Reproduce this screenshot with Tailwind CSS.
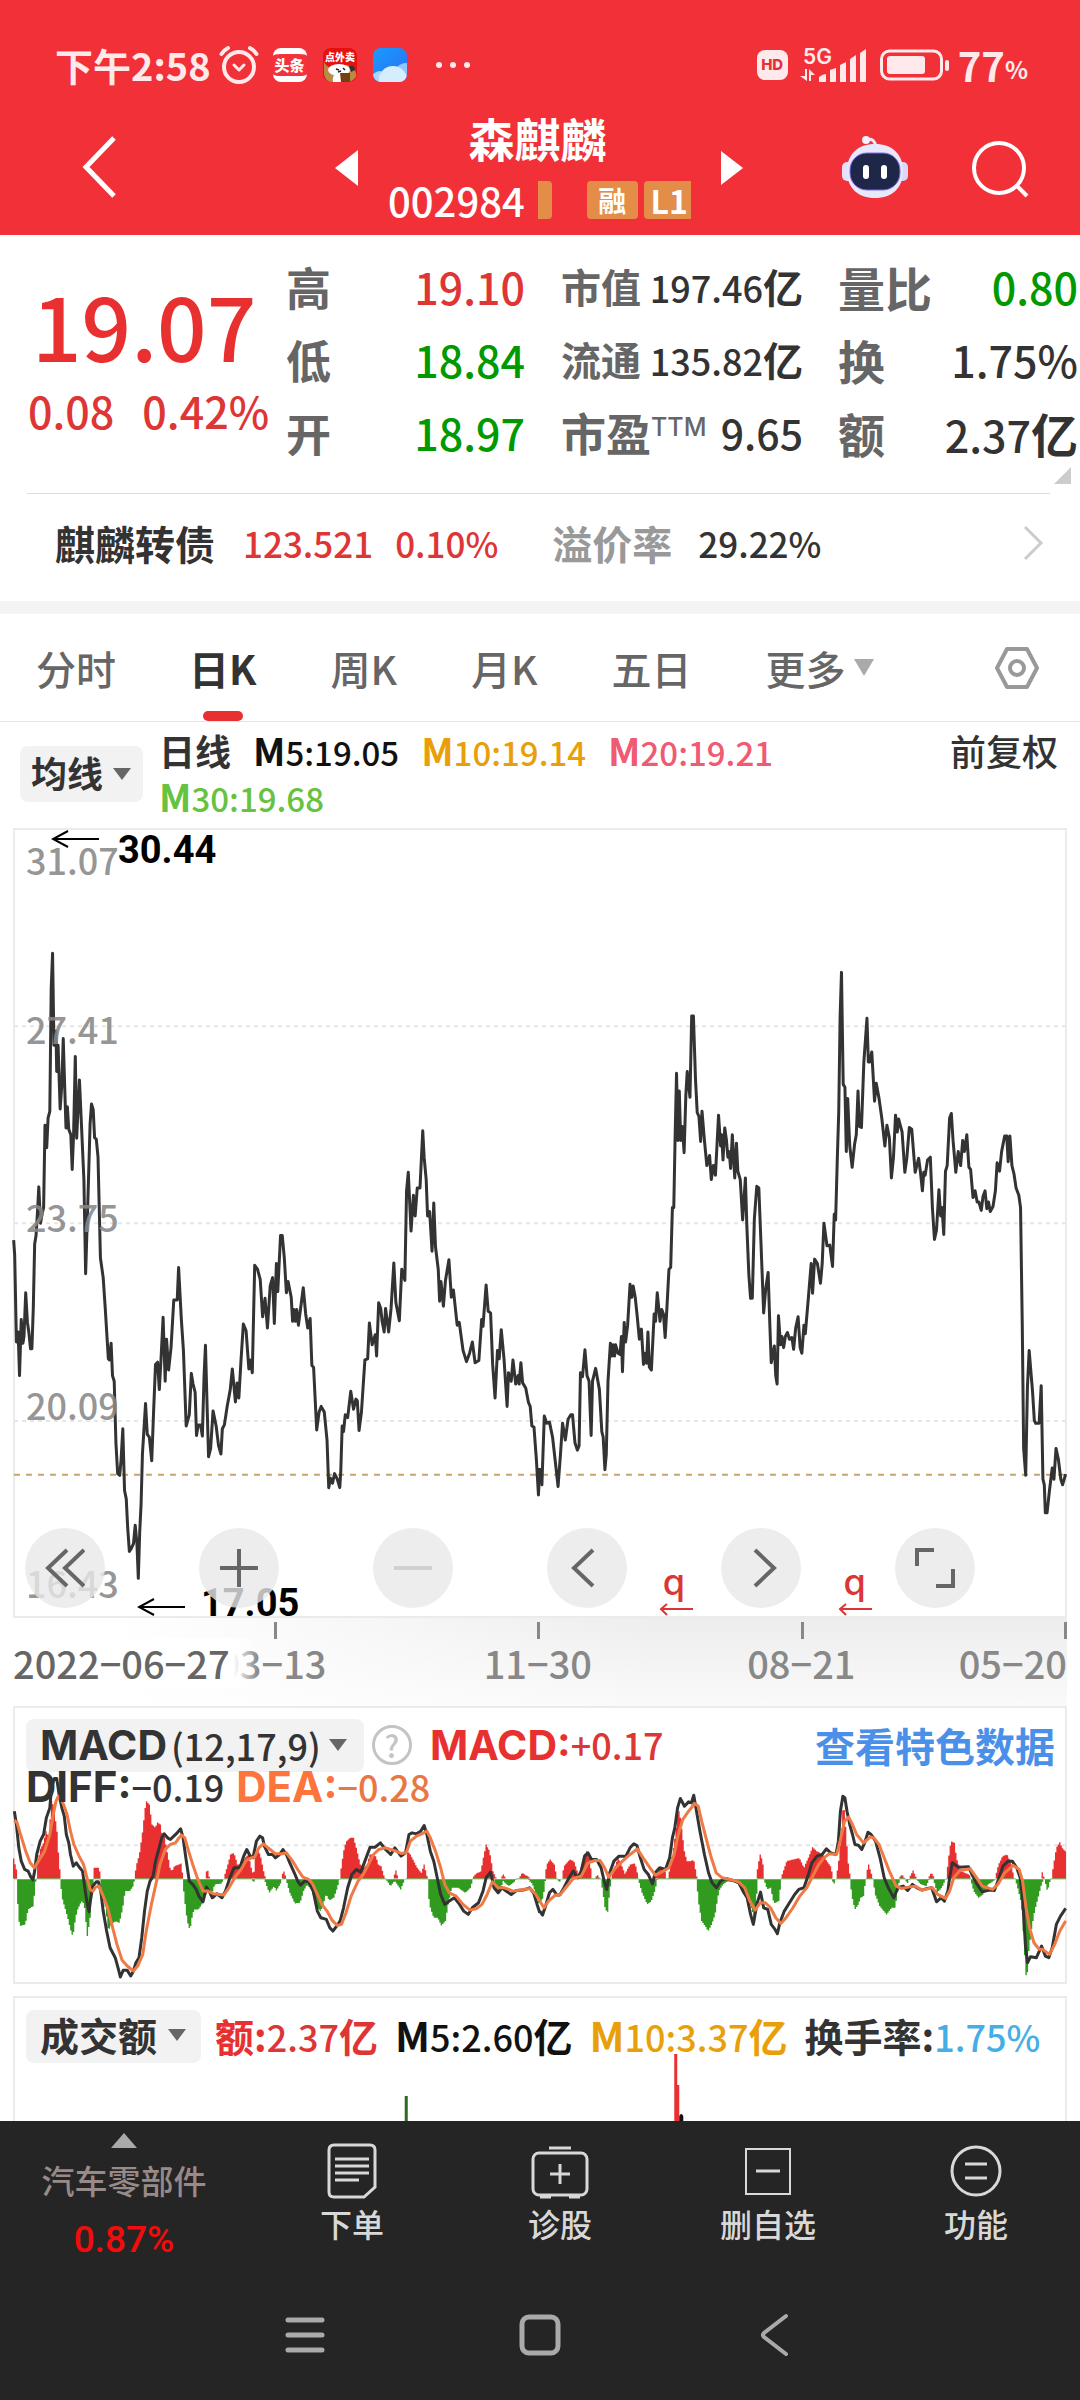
<!DOCTYPE html>
<html lang="zh-CN">
<head>
<meta charset="utf-8">
<meta name="viewport" content="width=device-width, initial-scale=1">
<title>森麒麟 002984</title>
<script src="https://cdn.jsdelivr.net/npm/@tailwindcss/browser@4"></script>
</head>
<body class="bg-white">
<div class="flex min-h-screen flex-col overflow-hidden bg-white font-['Noto_Sans_CJK_SC',sans-serif] font-medium text-[#333]">

  <header class="bg-[#f23038] text-white">
    <!-- status bar -->
    <div class="flex h-[100px] items-center pt-[30px] pr-[52px] pl-[55px] text-[#ffe9ea]">
      <span class="text-[38px] leading-[44px] font-bold">下午2:58</span>
      <svg class="ml-2 h-10 w-10" viewBox="0 0 40 40" fill="none" stroke="currentColor" stroke-width="4" stroke-linecap="round" stroke-linejoin="round"><circle cx="20" cy="22" r="15"/><path d="M2.500 9Q5 5 9 3M37.500 9Q35 5 31 3"/><path d="M15 20l5 5 5-5" stroke-width="3"/></svg>
      <span class="ml-[14px] flex h-[34px] w-[34px] items-center justify-center overflow-hidden rounded-lg border-y-[6px] border-white bg-[#f5323c] text-[15px] leading-5 font-black text-white">头条</span>
      <svg class="ml-4 h-[34px] w-[34px]" viewBox="0 0 34 34"><rect width="34" height="34" rx="8" fill="#e6100f"/><path d="M1 14q4 8 12 5 12-5 18 2 4 6 1 9-3 4-9 4H8q-6-1-7-8z" fill="#b98a45"/><ellipse cx="16" cy="22" rx="11" ry="6" fill="#fff"/><path d="M26 18q6-1 6 4l-4 2z" fill="#333"/><path d="M10 34q-1-8 4-8h6l4 8z" fill="#fff"/><path d="M17 25h10v9H18z" fill="#74400f"/><path d="M13 21l3 1M20 20l2 2M15 24l3-1" stroke="#222" stroke-width="1.500"/><text x="17" y="12.500" text-anchor="middle" font-size="10" font-weight="900" fill="#fff">点外卖</text></svg>
      <svg class="ml-4 h-[34px] w-[34px]" viewBox="0 0 34 34"><defs><clipPath id="wx"><rect width="34" height="34" rx="8"/></clipPath><linearGradient id="sky" x2="1" y2="1"><stop stop-color="#169bff"/><stop offset="1" stop-color="#2f6ff2"/></linearGradient></defs><g clip-path="url(#wx)"><rect width="34" height="34" fill="url(#sky)"/><circle cx="33" cy="27" r="12" fill="#8fc6ff"/><circle cx="7" cy="32" r="9" fill="#a9d6ff"/><circle cx="20" cy="32" r="14" fill="#d6edff"/></g></svg>
      <svg class="ml-[28px] h-2 w-[36px]" viewBox="0 0 36 8" fill="currentColor"><circle cx="4" cy="4" r="3"/><circle cx="18" cy="4" r="3"/><circle cx="32" cy="4" r="3"/></svg>
      <span class="ml-auto flex h-[30px] w-[31px] items-center justify-center rounded-lg bg-[#ffe9ea] font-[Inter,sans-serif] text-[15px] font-extrabold text-[#e5303a]">HD</span>
      <svg class="ml-3 h-[36px] w-[68px]" viewBox="0 0 68 36" fill="currentColor"><text x="3" y="17" font-family="Inter" font-size="21" font-weight="600">5G</text><path d="M5 22h2v12L0 29h5zM9 34V22l6 6h-4v6zM19 35v-5q4-3 7-3v8zM30 35V23l6-2v14zM40 35V18l6-3v20zM50 35V12l6-4v27zM60 35V6l6-4v33z"/></svg>
      <svg class="ml-3 h-8 w-[70px]" viewBox="0 0 70 32" fill="none" stroke="currentColor"><rect x="1.500" y="2" width="60" height="28" rx="8" stroke-width="3"/><rect x="7" y="7" width="38" height="18" rx="3" fill="currentColor" stroke="none"/><path d="M67 13v7" stroke-width="4" stroke-linecap="round"/></svg>
      <span class="ml-2 text-[40px] leading-[44px] font-bold">77</span><span class="pt-2 text-[24px] leading-7 font-bold">%</span>
    </div>

    <!-- title bar -->
    <div class="flex h-[135px] items-start">
      <button aria-label="返回" class="ml-[82px] pt-[35px]"><svg class="h-16 w-9" viewBox="0 0 36 64" fill="none" stroke="#fff" stroke-width="5"><path d="M32 3L4 32l28 29"/></svg></button>
      <button aria-label="上一只" class="ml-auto pt-[50px]"><svg class="h-9 w-[23px]" viewBox="0 0 23 36" fill="#fff"><path d="M23 0v36L0 18z"/></svg></button>
      <div class="mx-[30px] w-[303px] pt-[13px]">
        <h1 class="pr-1 text-center text-[46px] leading-[48px] font-bold">森麒麟</h1>
        <div class="flex items-center pt-4 whitespace-nowrap">
          <span class="text-[40px] leading-[46px]">002984</span>
          <span class="ml-[13px] h-[38px] w-[14px] rounded-r-sm bg-[#e38d48]"></span>
          <span class="ml-[35px] flex h-[38px] w-[51px] items-center justify-center rounded-sm bg-[#e38d48] text-[28px] font-bold">融</span>
          <span class="ml-[6px] flex h-[38px] w-[47px] items-center justify-center rounded-l-sm bg-[#e38d48] pl-1 text-[32px] font-bold">L1</span>
        </div>
      </div>
      <button aria-label="下一只" class="pt-[51px]"><svg class="h-[34px] w-[22px]" viewBox="0 0 22 34" fill="#fff"><path d="M0 0v34l22-17z"/></svg></button>
      <button aria-label="智能助手" class="ml-[98px] pt-[34px]"><svg class="h-[66px] w-[68px]" viewBox="0 0 68 66"><path d="M25 6q9-3 10 8" fill="none" stroke="#e9e6fb" stroke-width="3"/><circle cx="25" cy="6" r="4" fill="#f3f0ff"/><rect x="1" y="28" width="12" height="19" rx="5" fill="#e4e2fa"/><rect x="55" y="28" width="12" height="19" rx="5" fill="#dcd8f8"/><path d="M34 10c17 0 28 10 28 27S51 64 34 64 6 54 6 37s11-27 28-27z" fill="#e8e7fb"/><rect x="9" y="19" width="50" height="37" rx="17" fill="#1f2749" stroke="#7e6cf0" stroke-width="1"/><rect x="22" y="31" width="6" height="14" rx="3" fill="#fff"/><rect x="40" y="31" width="6" height="14" rx="3" fill="#fff"/></svg></button>
      <button aria-label="搜索" class="mr-[51px] ml-[62px] pt-[39px]"><svg class="h-[60px] w-[58px]" viewBox="0 0 58 60" fill="none" stroke="#fff" stroke-width="4"><circle cx="28" cy="29" r="25"/><path d="M45 46l11 11"/></svg></button>
    </div>
  </header>

  <main class="flex flex-1 flex-col">
    <!-- quote -->
    <section class="relative grid h-[258px] grid-cols-[286px_239px_241px_1fr] pt-[15px] text-[43px] leading-[73px]">
      <div class="pl-7 text-[#e93030]">
        <div class="pt-6 pl-1 text-[87px] leading-[100px]">19.07</div>
        <div class="flex gap-7 pt-[6px] text-[43px] leading-[60px] whitespace-nowrap text-[#de3535]"><span>0.08</span><span>0.42%</span></div>
      </div>
      <dl>
        <div class="flex justify-between"><dt class="text-[45px] font-bold text-[#666]">高</dt><dd class="text-[#de3535]">19.10</dd></div>
        <div class="flex justify-between"><dt class="text-[45px] font-bold text-[#666]">低</dt><dd class="text-[#090]">18.84</dd></div>
        <div class="flex justify-between"><dt class="text-[45px] font-bold text-[#666]">开</dt><dd class="text-[#090]">18.97</dd></div>
      </dl>
      <dl class="ml-9 w-[242px] whitespace-nowrap">
        <div class="flex h-[73px] justify-between text-[40px]"><dt class="font-bold text-[#666]">市值</dt><dd class="text-[36px]">197.46<span class="text-[40px] font-bold">亿</span></dd></div>
        <div class="flex h-[73px] justify-between text-[40px]"><dt class="font-bold text-[#666]">流通</dt><dd class="text-[36px]">135.82<span class="text-[40px] font-bold">亿</span></dd></div>
        <div class="flex h-[73px] justify-between"><dt class="flex text-[45px] font-bold text-[#666]">市盈<sup class="top-0 pt-[17px] font-[Inter,sans-serif] text-[25px] leading-7 font-medium">TTM</sup></dt><dd class="text-[41px]">9.65</dd></div>
      </dl>
      <dl class="ml-[72px] pr-0.5">
        <div class="flex h-[73px] justify-between"><dt class="text-[47px] font-bold text-[#666]">量比</dt><dd class="text-[#090]">0.80</dd></div>
        <div class="flex h-[73px] justify-between"><dt class="text-[47px] font-bold text-[#666]">换</dt><dd>1.75%</dd></div>
        <div class="flex h-[73px] justify-between"><dt class="text-[47px] font-bold text-[#666]">额</dt><dd>2.37<span class="text-[47px] font-bold">亿</span></dd></div>
      </dl>
      <svg class="absolute right-[9px] bottom-[9px] h-[17px] w-[17px]" viewBox="0 0 17 17" fill="#ccc"><path d="M17 0v17H0z"/></svg>
    </section>

    <a href="#bond" class="mr-[30px] ml-[27px] flex h-[108px] items-center border-t border-[#ddd] pr-[6px] pb-[10px] pl-7 text-[35px] leading-[50px]">
      <span class="text-[40px] font-bold">麒麟转债</span>
      <span class="ml-7 text-[#de3535]">123.521</span>
      <span class="ml-[22px] text-[#de3535]">0.10%</span>
      <span class="ml-[54px] text-[40px] font-bold text-[#999]">溢价率</span>
      <span class="ml-[26px]">29.22%</span>
      <svg class="ml-auto h-9 w-[22px]" viewBox="0 0 22 36" fill="none" stroke="#ccc" stroke-width="3"><path d="M3 2l16 16L3 34"/></svg>
    </a>
    <div class="h-[13px] bg-[#f4f4f4]"></div>

    <!-- period tabs -->
    <nav class="flex h-[108px] items-center border-b border-[#e4e4e4] pr-10 pl-9 text-[40px] leading-[50px] text-[#666]">
      <a href="#time">分时</a>
      <a href="#day" class="relative ml-[73px] flex h-full items-center font-bold text-[#333]">日K<span class="absolute bottom-0 left-1/2 h-[10px] w-10 -translate-x-1/2 rounded-full bg-[#e93030]"></span></a>
      <a href="#week" class="ml-[74px]">周K</a>
      <a href="#month" class="ml-[74px]">月K</a>
      <a href="#five" class="ml-[74px]">五日</a>
      <button class="ml-[74px] flex items-center gap-2">更多<svg class="h-[17px] w-[20px]" viewBox="0 0 20 17" fill="#aaa"><path d="M0 0h20L10 17z"/></svg></button>
      <button aria-label="设置" class="ml-auto"><svg class="h-11 w-[46px]" viewBox="0 0 46 44" fill="none" stroke="#999" stroke-width="4" stroke-linejoin="round"><path d="M13 3h20l10 19-10 19H13L3 22z"/><circle cx="23" cy="22" r="7"/></svg></button>
    </nav>

    <!-- moving averages -->
    <section class="flex h-[106px] pr-[22px] pl-5 text-[33px] leading-[46px]">
      <div class="relative mt-6 h-14">
        <select aria-label="主图指标" class="h-14 w-[123px] appearance-none rounded-lg bg-[#f2f2f2] pb-1 pl-[11px] text-[36px] leading-[52px] font-bold"><option>均线</option></select>
        <svg class="pointer-events-none absolute top-[22px] right-3 h-3 w-[18px]" viewBox="0 0 18 12" fill="#666"><path d="M0 0h18L9 12z"/></svg>
      </div>
      <div class="ml-4 flex flex-1 flex-wrap content-start gap-x-[22px] pt-[5px] whitespace-nowrap">
        <b class="h-[46px] text-[36px]">日线</b>
        <span class="h-[46px] text-[#111]"><b class="text-[38px]">M</b>5:19.05</span>
        <span class="h-[46px] text-[#e99f0a]"><b class="text-[38px]">M</b>10:19.14</span>
        <span class="h-[46px] text-[#f05a72]"><b class="text-[38px]">M</b>20:19.21</span>
        <span class="h-[46px] basis-full text-[#66c23f]"><b class="text-[38px]">M</b>30:19.68</span>
      </div>
      <button class="self-start pt-[5px] text-[36px]">前复权</button>
    </section>

    <!-- price chart -->
    <section class="relative mx-[13px] h-[790px] border-2 border-[#ebebeb]">
      <svg class="absolute -inset-[1px] h-[788px] w-[calc(100%+2px)] overflow-visible" viewBox="41 14 3055 1407" preserveAspectRatio="none" fill="none">
        <g stroke="#e6e6e6" stroke-width="2" stroke-dasharray="4 4"><path vector-effect="non-scaling-stroke" d="M41 366H3096"/><path vector-effect="non-scaling-stroke" d="M41 718H3096"/><path vector-effect="non-scaling-stroke" d="M41 1071H3096"/></g>
        <path vector-effect="non-scaling-stroke" d="M41 1167H3096" stroke="#c4a56f" stroke-width="2" stroke-dasharray="6 6"/>
        <g stroke="#333" stroke-width="3" stroke-linejoin="round">
          <polyline vector-effect="non-scaling-stroke" points="40,748 43,775 48,930 53,912 57,990 62,890 67,932 70,920 75,842 80,895 84,912 89,942 93,942 97,870 101,755 105,740 109,700 113,653 118,718 123,700 127,690 131,543 136,583 140,530 145,518 149,300 153,236 157,400 163,375 165,447 169,400 175,514 180,470 184,388 188,470 192,548 196,510 200,550 206,560 210,622 214,560 219,420 223,566 231,462 236,530 244,640 249,808 255,690 262,540 266,505 271,515 275,565 280,568 285,600 292,780 300,815 306,870 315,960 318,962 323,932 327,990 332,1000 337,1110 342,1165 348,1168 352,1140 357,1085 362,1195 367,1210 371,1260 376,1304 382,1298 388,1290 393,1257 398,1290 402,1352 406,1270 410,1220 414,1130 423,1040 428,1095 434,1100 441,1142 446,1060 452,970 458,966 463,1015 468,960 474,886 480,1000 484,925 490,980 497,940 505,855 515,855 519,797 527,890 533,945 541,1080 550,1060 556,986 561,1005 567,1020 571,1097 576,1078 583,1078 588,1098 593,990 597,936 602,1050 606,1135 612,1120 619,1053 628,1080 635,1115 642,1130 646,1085 652,1078 660,1045 669,1015 675,978 684,1037 689,1003 694,1030 700,965 707,898 715,910 723,978 727,962 733,985 740,793 748,800 756,818 763,885 770,852 777,905 785,830 792,815 797,897 803,790 807,840 815,740 820,740 826,780 832,842 837,822 846,850 850,893 854,872 858,893 862,872 867,900 881,833 888,880 894,905 901,888 906,972 911,975 920,1087 927,1055 933,1045 942,1055 950,1105 955,1190 960,1173 966,1182 972,1165 980,1175 987,1190 990,1160 994,1080 998,1090 1003,1060 1010,1065 1019,1018 1027,1050 1034,1032 1038,1035 1043,1088 1050,1055 1060,962 1068,960 1073,896 1081,935 1090,917 1094,955 1100,860 1106,870 1110,893 1116,912 1120,870 1129,912 1136,870 1144,789 1150,860 1160,892 1167,800 1176,820 1181,660 1186,627 1194,732 1201,668 1206,705 1212,655 1220,655 1228,553 1232,600 1238,640 1242,705 1248,697 1255,768 1260,682 1265,760 1273,800 1277,857 1281,822 1288,866 1294,820 1304,783 1311,850 1317,837 1328,900 1334,895 1345,945 1355,965 1364,950 1372,930 1380,967 1391,963 1399,890 1403,902 1412,828 1418,875 1425,878 1431,970 1438,1030 1445,945 1450,960 1456,908 1464,960 1473,1045 1477,985 1485,1000 1490,962 1498,1005 1505,990 1508,1005 1513,967 1518,1003 1527,1012 1535,1038 1540,1045 1545,1080 1551,1082 1558,1140 1564,1203 1568,1155"/>
          <polyline transform="translate(1568 0)" vector-effect="non-scaling-stroke" points="0,1155 6,1185 13,1062 20,1075 28,1073 37,1100 47,1155 53,1188 60,1130 66,1075 74,1105 82,1068 90,1060 95,1060 102,1110 109,1123 114,1115 118,985 124,992 131,944 137,990 143,1000 149,1097 153,1000 162,977 173,1015 180,1090 184,1100 189,1158 193,1130 198,1000 205,932 209,955 213,935 217,955 220,935 227,950 233,952 237,920 240,983 245,895 249,930 255,900 262,827 267,850 271,830 277,850 283,885 289,925 295,907 301,970 305,950 310,968 314,912 318,975 324,980 332,880 336,893 341,842 349,893 354,872 359,880 364,922 369,870 375,800 380,797 385,690 389,690 393,560 397,450 401,570 405,482 409,570 414,545 419,592 424,490 428,447 436,493 441,348 446,348 452,460 457,520 462,527 467,572 471,518 478,570 485,615 493,597 498,640 504,615 510,632 519,525 525,580 528,560 532,605 537,548 542,570 546,600 550,590 554,620 559,560 566,637 571,575 575,625 582,640 589,712 597,637 601,720 607,810 612,852 617,852 623,710 630,652 636,655 642,750 650,878 656,835 663,806 668,900 672,967 681,937 685,990 689,1005 693,883 699,935 703,920 708,940 713,920 719,913 725,925 732,922 737,943 743,905 750,885 756,940 761,950 767,900 771,915 780,850 788,790 792,843 798,782 806,790 815,825 820,790 825,718 834,758 842,757 850,795 855,702 859,712 864,600 868,520 872,350 876,270 881,470 886,475 890,590 894,495 900,580 907,618 914,577 919,560 924,482 928,545 934,547 941,430 950,352 954,430 958,430 964,412 972,500 977,468 985,495 993,530 1002,580 1008,543 1015,565 1021,637 1027,600 1033,525 1038,555 1042,532 1052,555 1060,627 1066,600 1073,547 1080,550 1090,627 1100,602 1105,625 1111,660 1115,627 1119,632 1126,605 1134,600 1140,690 1146,747 1152,730 1159,658 1164,705 1168,690 1173,738 1178,625 1183,615 1190,530 1195,522 1200,570 1208,627 1215,590 1222,615 1228,570 1233,590 1240,560 1246,618 1251,622 1258,672 1264,660 1270,680 1275,680 1282,695 1287,670 1293,660 1298,692 1303,680 1308,697 1316,688 1323,660 1328,610 1335,625 1341,590 1350,562 1356,562 1360,608 1365,562 1371,615 1377,630 1383,655 1391,668 1396,690 1401,900 1405,1120 1411,1168 1416,1010 1421,945 1427,990 1431,1020 1436,1070 1440,1075 1450,1075 1456,1008 1461,1175 1465,1185 1468,1235 1473,1235 1480,1195 1488,1155 1493,1175 1499,1120 1506,1140 1513,1175 1518,1185 1527,1166"/>
        </g>
      </svg>
      <!-- axis values and extremes -->
      <div class="absolute inset-0 text-[36px] leading-10 text-[#888]/90">
        <span class="absolute top-[9px] left-[11px]">31.07</span>
        <span class="absolute top-[178px] left-[11px]">27.41</span>
        <span class="absolute top-[366px] left-[11px]">23.75</span>
        <span class="absolute top-[554px] left-[11px]">20.09</span>
        <span class="absolute top-[732px] left-[11px]">16.43</span>
      </div>
      <div class="absolute inset-0 font-[Roboto,sans-serif] text-[38px] leading-10 font-bold text-black">
        <svg class="absolute top-0 left-9 h-[18px] w-12" viewBox="0 0 48 18" fill="none" stroke="#000" stroke-width="2"><path d="M48 9H2M17 1L2 9l15 8"/></svg>
        <span class="absolute top-0 left-[103px]">30.44</span>
        <svg class="absolute bottom-0 left-[122px] h-[18px] w-12" viewBox="0 0 48 18" fill="none" stroke="#000" stroke-width="2"><path d="M48 9H2M17 1L2 9l15 8"/></svg>
        <span class="absolute -bottom-[7px] left-[186px]">17.05</span>
      </div>
      <div class="absolute inset-0 font-[Inter,sans-serif] text-[36px] leading-8 font-medium text-[#dc3535]">
        <span class="absolute bottom-[18px] left-[61.700%]">q</span>
        <svg class="absolute bottom-0 left-[61.300%] h-[13px] w-[34px]" viewBox="0 0 34 13" fill="none" stroke="#dc3535" stroke-width="2"><path d="M34 6H2M8 1L2 6l6 6"/></svg>
        <span class="absolute bottom-[18px] left-[78.900%]">q</span>
        <svg class="absolute bottom-0 left-[78.400%] h-[13px] w-[34px]" viewBox="0 0 34 13" fill="none" stroke="#dc3535" stroke-width="2"><path d="M34 6H2M8 1L2 6l6 6"/></svg>
      </div>
      <div class="absolute bottom-[8px] left-[10px] flex gap-[94px]">
        <button aria-label="最早" class="flex h-20 w-20 items-center justify-center rounded-full bg-[#e9e9e9]/80"><svg class="h-10 w-10" viewBox="0 0 40 40" fill="none" stroke="#666" stroke-width="4"><path d="M22 2L3 20l19 18M39 2L20 20l19 18"/></svg></button>
        <button aria-label="放大" class="flex h-20 w-20 items-center justify-center rounded-full bg-[#e9e9e9]/80"><svg class="h-10 w-10" viewBox="0 0 40 40" fill="none" stroke="#666" stroke-width="4"><path d="M1 20h38M20 1v38"/></svg></button>
        <button aria-label="缩小" class="flex h-20 w-20 items-center justify-center rounded-full bg-[#e9e9e9]/80"><svg class="h-10 w-10" viewBox="0 0 40 40" fill="none" stroke="#d0d0d0" stroke-width="4"><path d="M1 20h38"/></svg></button>
        <button aria-label="左移" class="flex h-20 w-20 items-center justify-center rounded-full bg-[#e9e9e9]/80"><svg class="h-10 w-10" viewBox="0 0 40 40" fill="none" stroke="#666" stroke-width="4"><path d="M26 2L7 20l19 18"/></svg></button>
        <button aria-label="右移" class="flex h-20 w-20 items-center justify-center rounded-full bg-[#e9e9e9]/80"><svg class="h-10 w-10" viewBox="0 0 40 40" fill="none" stroke="#666" stroke-width="4"><path d="M14 2l19 18-19 18"/></svg></button>
        <button aria-label="全屏" class="flex h-20 w-20 items-center justify-center rounded-full bg-[#e9e9e9]/80"><svg class="h-[42px] w-[42px]" viewBox="0 0 42 42" fill="none" stroke="#666" stroke-width="4"><path d="M3 19V3h17M39 22v17H22"/></svg></button>
      </div>
    </section>

    <!-- dates -->
    <div class="relative mx-[13px] h-[88px] bg-linear-to-b from-[#ededed] to-[#fafafa] text-[38px] leading-[50px] text-[#888]">
      <div class="absolute inset-y-0 left-0 w-[62%] bg-linear-to-r from-white from-15% to-transparent"></div>
      <div class="relative grid grid-cols-4 pt-5 text-right">
        <span class="translate-x-[50px]">03−13</span>
        <span class="translate-x-[52px]">11−30</span>
        <span class="translate-x-[52px]">08−21</span>
        <span>05−20</span>
      </div>
      <div class="absolute inset-x-0 top-1 grid h-[17px] grid-cols-4"><i class="border-r-[3px] border-[#888]"></i><i class="border-r-[3px] border-[#888]"></i><i class="border-r-[3px] border-[#888]"></i><i class="border-r-[3px] border-[#888]"></i></div>
      <span class="absolute top-5 left-0 bg-linear-to-r from-white from-90% to-white/0 pr-7 text-[#666]">2022−06−27</span>
    </div>

    <!-- MACD -->
    <section class="relative mx-[13px] h-[278px] border-2 border-[#ebebeb] bg-white">
      <svg class="absolute -inset-[1px] h-[276px] w-[calc(100%+2px)] overflow-visible" viewBox="41 47 3055 829" preserveAspectRatio="none" fill="none">
        <path vector-effect="non-scaling-stroke" d="M41 462H3096" stroke="#e6e6e6" stroke-width="2" stroke-dasharray="4 4"/>
        <path id="up" fill="#e83030"/>
        <path id="down" fill="#309b1e"/>
        <g stroke-width="3" stroke-linejoin="round">
          <polyline stroke="#333" vector-effect="non-scaling-stroke" points="42,360 48,400 55,470 62,510 72,535 82,540 90,558 96,566 101,540 107,490 117,450 127,430 135,380 145,350 150,290 158,262 165,262 172,310 180,350 187,375 193,430 200,455 205,490 213,525 222,515 232,530 240,540 248,600 254,640 259,662 264,620 270,585 280,572 286,572 293,600 300,660 310,720 320,770 335,800 343,830 350,858 358,838 370,838 380,855 388,840 395,815 404,800 412,740 420,660 428,600 436,570 445,555 452,510 460,480 470,440 477,428 487,440 495,445 505,435 515,425 525,413 532,440 540,500 550,570 560,580 570,595 578,615 590,632 600,588 610,605 617,620 630,608 645,620 655,600 668,560 680,530 697,530 708,495 717,475 727,495 735,500 745,450 755,435 763,440 768,465 780,490 792,490 800,500 812,490 822,475 832,490 842,515 855,545 865,570 873,582 885,570 897,572 910,600 922,660 932,680 948,685 958,710 967,720 978,705 988,690 998,650 1010,590 1022,550 1035,535 1048,543 1060,510 1075,468 1090,468 1105,455 1120,475 1135,490 1147,470 1165,495 1178,485 1188,430 1197,425 1210,428 1222,420 1232,403 1240,430 1250,480 1260,510 1270,560 1280,610 1292,640 1305,630 1320,620 1335,640 1347,660 1360,670 1372,650 1390,635 1403,600 1412,560 1425,543 1435,590 1447,605 1458,590 1470,600 1485,610 1500,598 1520,597 1538,590 1550,605 1560,640 1568,665"/>
          <polyline transform="translate(1568 0)" stroke="#333" vector-effect="non-scaling-stroke" points="0,660 8,672 18,640 28,605 38,595 50,612 58,612 70,590 85,560 97,540 110,560 120,540 130,495 140,485 150,505 165,505 178,530 187,570 194,595 203,545 215,510 230,495 250,495 262,470 273,458 282,463 292,500 303,535 315,550 327,578 335,545 348,530 365,535 377,500 385,440 392,410 400,350 408,322 420,345 432,332 440,335 447,312 455,360 465,420 478,490 490,545 500,575 513,590 525,570 540,562 560,568 578,575 590,600 602,620 612,670 620,700 630,640 641,603 650,650 662,655 672,700 683,715 690,728 697,695 710,660 725,635 740,610 752,595 767,590 780,550 790,515 805,495 820,490 832,473 845,485 860,490 867,450 873,360 880,315 886,320 892,360 900,400 908,430 915,460 925,462 935,475 945,450 953,423 962,430 975,450 988,500 1000,560 1012,590 1028,620 1040,590 1055,585 1068,598 1082,580 1095,590 1110,597 1125,592 1138,590 1152,632 1165,620 1175,630 1185,600 1190,560 1198,515 1215,528 1245,527 1255,550 1270,580 1285,602 1305,597 1320,598 1332,565 1345,525 1360,510 1372,510 1385,530 1395,560 1402,620 1410,760 1416,815 1425,797 1442,800 1457,765 1468,795 1478,800 1488,770 1500,700 1512,675 1527,652"/>
          <polyline stroke="#f07a45" vector-effect="non-scaling-stroke" points="42,387 50,395 60,430 75,480 88,515 100,530 112,510 130,480 145,430 155,370 163,330 170,315 178,325 185,340 195,370 205,420 215,460 230,495 243,520 253,560 262,595 270,600 278,588 288,585 300,615 313,650 325,700 340,760 355,808 370,825 388,840 400,825 415,790 425,720 440,640 455,570 465,520 480,475 495,460 510,455 520,440 528,432 537,440 548,480 560,520 575,565 590,600 605,600 620,608 650,612 665,590 685,555 700,535 715,508 730,500 740,497 752,470 765,458 785,475 800,488 820,488 832,485 850,510 865,535 880,558 897,565 908,578 920,605 935,640 950,660 965,688 980,703 992,700 1005,665 1020,615 1040,570 1055,550 1070,520 1085,490 1100,475 1120,470 1145,478 1165,487 1180,485 1192,450 1210,435 1225,428 1240,420 1250,440 1265,480 1280,530 1292,580 1305,605 1325,615 1345,640 1365,657 1385,652 1400,640 1415,610 1430,572 1447,590 1465,590 1490,600 1520,595 1540,592 1555,608 1568,630"/>
          <polyline transform="translate(1568 0)" stroke="#f07a45" vector-effect="non-scaling-stroke" points="0,630 12,650 25,630 45,612 60,610 75,590 97,562 120,555 140,515 160,508 175,508 188,530 200,558 220,530 240,510 262,490 283,473 300,500 320,530 335,552 350,545 375,530 390,490 402,430 415,385 432,360 450,337 460,345 470,390 485,450 498,500 512,545 530,560 560,567 578,573 595,590 610,630 625,657 640,635 655,635 670,650 685,680 700,697 715,680 735,650 755,615 775,590 790,560 810,520 825,500 840,488 862,490 872,450 885,390 897,378 908,400 920,430 940,455 960,437 970,440 985,460 1000,500 1015,540 1035,585 1050,592 1070,588 1090,585 1110,597 1140,590 1155,610 1178,622 1190,600 1202,560 1220,538 1250,533 1265,555 1285,585 1315,595 1330,580 1350,545 1375,523 1392,535 1402,570 1412,650 1422,710 1435,755 1450,775 1460,775 1480,790 1495,760 1510,720 1527,690"/>
        </g>
      </svg>
      <div class="relative pt-[10px] pr-[10px] pl-[11px] text-[36px] leading-[53px] whitespace-nowrap">
        <div class="flex items-center">
          <button aria-haspopup="listbox" class="flex h-[53px] w-[338px] items-center rounded-lg bg-[#f2f2f2] pl-[14px]"><b class="font-[Inter,sans-serif] text-[41px]">MACD</b><span class="ml-1">(12,17,9)</span><svg class="ml-2 h-3 w-[18px]" viewBox="0 0 18 12" fill="#666"><path d="M0 0h18L9 12z"/></svg></button>
          <button aria-label="说明" class="ml-2 flex h-10 w-10 items-center justify-center rounded-full border-3 border-[#c4c4c4] text-[30px] leading-8 text-[#c4c4c4]">?</button>
          <span class="ml-[18px] text-[#de3535]"><b class="font-[Inter,sans-serif] text-[41px] text-[#e93030]">MACD:</b>+0.17</span>
          <a href="#data" class="ml-auto text-[40px] font-bold text-[#4a90e8]">查看特色数据</a>
        </div>
        <div class="-mt-3 flex gap-3 text-[36px] leading-[53px]"><span><b class="font-[Inter,sans-serif] text-[42px]">DIFF:</b>−0.19</span><span class="text-[#e87744]"><b class="font-[Inter,sans-serif] text-[42px] text-[#fd743c]">DEA:</b>−0.28</span></div>
      </div>
    </section>

    <!-- turnover -->
    <section class="relative mx-[13px] mt-3 h-[124px] flex-1 border-2 border-b-0 border-[#ebebeb]">
      <div class="flex h-[65px] items-center pt-[10px] pl-[11px] text-[36px] leading-[53px] whitespace-nowrap">
        <div class="relative h-[53px]">
          <select aria-label="副图指标" class="h-[53px] w-[175px] appearance-none rounded-lg bg-[#f2f2f2] pb-1 pl-[14px] text-[39px] leading-[49px] font-bold"><option>成交额</option></select>
          <svg class="pointer-events-none absolute top-5 right-[15px] h-3 w-[18px]" viewBox="0 0 18 12" fill="#666"><path d="M0 0h18L9 12z"/></svg>
        </div>
        <span class="ml-[14px] text-[#de3535]"><b class="text-[39px] text-[#e93030]">额:</b>2.37<b class="text-[39px]">亿</b></span>
        <span class="ml-[17px] text-[#111]"><b class="text-[41px]">M</b>5:2.60<b class="text-[39px]">亿</b></span>
        <span class="ml-[17px] text-[#e99f0a]"><b class="text-[41px]">M</b>10:3.37<b class="text-[39px]">亿</b></span>
        <span class="ml-[17px]"><b class="text-[39px]">换手率:</b><span class="text-[#45aee6]">1.75%</span></span>
      </div>
      <svg class="absolute inset-x-0 bottom-0 h-[67px] w-full" viewBox="0 0 1048 67" preserveAspectRatio="none"><path d="M389 42h3v25h-3z" fill="#2f6b1c"/><path d="M658 0h3v31h2v36h-5z" fill="#e83030"/><path d="M663 67v-5q2-4 4 0v5z" fill="#111"/></svg>
    </section>
  </main>

  <footer class="bg-[#252525] text-[#d8d8d8]">
    <div class="grid h-[154px] grid-cols-[248px_1fr_1fr_1fr_1fr] text-[32px] leading-10">
      <a href="#sector" class="flex flex-col items-center pt-3">
        <svg class="h-[15px] w-[26px]" viewBox="0 0 26 15" fill="#aaa"><path d="M13 0l13 15H0z"/></svg>
        <span class="mt-3 text-[33px] text-[#988a88]">汽车零部件</span>
        <span class="mt-[20px] font-[Roboto,sans-serif] text-[37px] text-[#f20c0c]">0.87%</span>
      </a>
      <button class="flex flex-col items-center pt-[22px]"><svg class="h-14 w-14" viewBox="0 0 56 56" fill="none" stroke="#d8d8d8" stroke-width="3"><path d="M10 2h36q5 0 5 5v37L40 54H10q-5 0-5-5V7q0-5 5-5zM11 16h34M11 23h34M11 30h34M11 37h24"/></svg><span class="mt-1">下单</span></button>
      <button class="flex flex-col items-center pt-[22px]"><svg class="h-14 w-[60px]" viewBox="0 0 60 56" fill="none" stroke="#d8d8d8" stroke-width="3"><rect x="3" y="10" width="54" height="42" rx="6"/><path d="M19 5h22M30 21v20M20 31h20M10 54h11M39 54h11"/></svg><span class="mt-1">诊股</span></button>
      <button class="flex flex-col items-center pt-[22px]"><svg class="h-14 w-14" viewBox="0 0 56 56" fill="none" stroke="#d8d8d8" stroke-width="2"><rect x="6" y="6" width="44" height="45"/><path d="M16 28h24" stroke-width="3"/></svg><span class="mt-1">删自选</span></button>
      <button class="flex flex-col items-center pt-[22px]"><svg class="h-14 w-14" viewBox="0 0 56 56" fill="none" stroke="#d8d8d8" stroke-width="3"><circle cx="28" cy="28" r="24"/><path d="M17 21h22M17 35h22"/></svg><span class="mt-1">功能</span></button>
    </div>
    <div class="flex h-[125px] items-start justify-center gap-[191px] pt-[38px]">
      <button aria-label="最近任务"><svg class="h-11 w-11" viewBox="0 0 44 44" fill="none" stroke="#aaa" stroke-width="5" stroke-linecap="round"><path d="M5 7h34M5 22h34M5 37h34"/></svg></button>
      <button aria-label="主屏幕"><svg class="h-11 w-11" viewBox="0 0 44 44" fill="none" stroke="#aaa" stroke-width="5"><rect x="4" y="4" width="36" height="36" rx="7"/></svg></button>
      <button aria-label="返回上级"><svg class="h-11 w-11" viewBox="0 0 44 44" fill="none" stroke="#aaa" stroke-width="4" stroke-linecap="round"><path d="M33 3L11 20q-2 2 0 4l22 17"/></svg></button>
    </div>
  </footer>
</div>
<script>
// Envelopes of the MACD histogram; each run is x,y pairs, bars grow from the zero line.
const ZERO = 562, BAR = 4;
const up = [
 "38,502 46,535 48,562","104,562 105,530 115,475 125,455 132,420 140,440 148,330 155,345 160,390 165,430 170,520 176,562",
 "268,562 272,530 287,530 290,562","388,562 395,520 403,490 410,440 415,400 418,360 424,330 432,340 440,400 450,410 455,393 464,400 468,425 475,430 480,460 487,500 492,530 498,540 505,525 518,520 525,517 530,562",
 "594,562 600,530 607,562","648,562 660,520 668,490 678,485 688,520 697,520 710,500 720,490 728,530 735,555 740,490 750,480 756,500 765,545 770,562","815,562 822,538 830,562",
 "985,562 992,510 998,470 1005,450 1015,440 1025,440 1033,470 1040,500 1045,520 1055,530 1065,520 1072,490 1080,490 1090,495 1097,520 1105,525 1115,560",
 "1140,562 1148,538 1155,562","1178,562 1182,480 1190,490 1200,510 1210,530 1222,545 1230,520 1240,562","1370,562 1380,548 1395,540 1402,500 1410,460 1420,480 1430,540 1440,562","1452,562 1460,550 1468,562","1505,562 1515,545 1530,555 1540,562",
 "1580,562 1586,520 1596,505 1608,520 1616,562","1630,562 1636,525 1653,505 1665,510 1678,550 1688,540 1696,490 1703,478 1710,500 1718,562","1726,562 1733,550 1740,562",
 "1773,562 1783,530 1793,500 1803,520 1813,548 1828,520 1843,517 1853,562","1898,562 1913,535 1928,530 1934,562","1938,562 1948,510 1960,430 1968,350 1974,380 1980,430 1986,480 1993,510 2003,510 2013,505 2023,562",
 "2194,562 2200,520 2206,490 2213,510 2218,562","2266,562 2273,540 2283,510 2303,505 2320,500 2333,530 2346,500 2358,468 2370,480 2388,490 2400,510 2413,530 2416,562","2426,562 2433,520 2440,440 2448,330 2455,420 2461,510 2468,562",
 "2513,562 2520,517 2533,562","2608,562 2618,550 2625,562","2638,562 2650,538 2660,562","2693,562 2703,545 2713,562","2746,562 2753,500 2760,450 2770,455 2776,500 2788,540 2813,550 2818,562",
 "2888,562 2898,520 2910,495 2923,490 2936,520 2943,562","3021,562 3026,538 3030,562","3052,562 3058,520 3066,470 3076,453 3083,470 3096,485"];
const down = [
 "46,562 48,612 55,705 72,700 80,655 95,645 103,562","172,562 180,625 195,680 203,715 210,738 215,700 222,660 235,630 243,640 252,735 260,680 265,610 270,562",
 "288,562 295,610 305,650 313,720 322,700 335,690 345,695 355,650 362,600 375,600 385,585 390,562","528,562 535,630 542,690 550,718 556,680 562,655 575,655 590,630 600,600 615,605 622,580 640,578 650,562",
 "728,562 735,574 740,562","765,562 780,605 795,585 800,600 812,580 818,562","828,562 840,605 855,637 870,635 880,600 890,580 905,600 915,640 928,660 935,650 945,610 955,628 968,620 978,590 985,562",
 "1118,562 1132,585 1145,570 1162,595 1175,562","1240,562 1245,640 1258,680 1270,680 1280,703 1292,690 1300,640 1310,590 1330,590 1350,605 1365,590 1372,562",
 "1432,562 1440,595 1450,600 1460,570 1475,585 1490,575 1500,562","1530,562 1545,580 1555,610 1563,640 1576,620 1583,562","1616,562 1623,574 1630,562","1743,562 1750,610 1756,655 1763,662 1768,610 1774,562",
 "1851,562 1863,605 1878,640 1890,630 1900,600 1908,562","2020,562 2028,640 2036,690 2046,705 2055,720 2065,700 2075,670 2086,600 2098,580 2113,570 2138,575 2158,600 2173,630 2188,675 2195,620 2200,562",
 "2216,562 2226,595 2236,590 2246,637 2260,630 2268,562","2413,562 2420,580 2426,562","2466,562 2473,620 2481,655 2491,640 2498,620 2506,615 2513,562",
 "2533,562 2540,610 2553,645 2573,670 2588,650 2598,650 2608,580 2613,562","2626,562 2633,578 2640,562","2656,562 2673,580 2688,585 2698,562","2708,562 2720,605 2733,590 2746,562",
 "2816,562 2826,600 2840,620 2853,610 2868,580 2883,570 2893,562","2946,562 2956,600 2965,640 2970,720 2976,830 2980,876 2986,780 2993,720 3003,660 3013,620 3023,580 3030,562","3031,562 3040,600 3050,562"];
function bars(runs) {
  let d = "";
  for (const run of runs) {
    const p = run.split(" ").map(s => s.split(",").map(Number));
    for (let x = p[0][0]; x < p[p.length - 1][0]; x += BAR) {
      const i = p.findIndex(q => q[0] > x), a = p[i - 1], b = p[i];
      const y = Math.round(a[1] + (b[1] - a[1]) * (x - a[0]) / (b[0] - a[0]));
      d += `M${x} ${ZERO}V${y}h${BAR}V${ZERO}z`;
    }
  }
  return d;
}
document.getElementById("up").setAttribute("d", bars(up));
document.getElementById("down").setAttribute("d", bars(down) + `M41 ${ZERO}H3096v2H41z`);
</script>
</body>
</html>
